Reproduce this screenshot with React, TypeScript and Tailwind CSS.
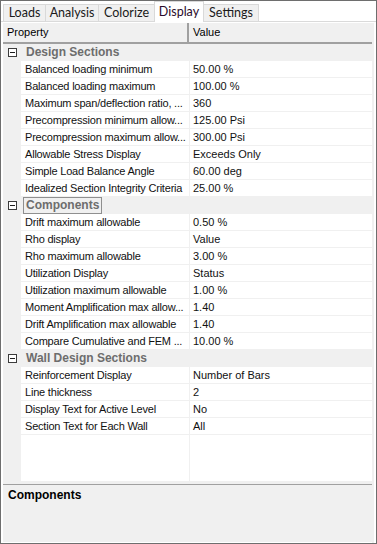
import React from 'react';

type Row = { name: string; value: string };
type Category = { title: string; selected?: boolean; rows: Row[] };

const categories: Category[] = [
  {
    title: 'Design Sections',
    rows: [
      { name: 'Balanced loading minimum', value: '50.00 %' },
      { name: 'Balanced loading maximum', value: '100.00 %' },
      { name: 'Maximum span/deflection ratio, ...', value: '360' },
      { name: 'Precompression minimum allow...', value: '125.00 Psi' },
      { name: 'Precompression maximum allow...', value: '300.00 Psi' },
      { name: 'Allowable Stress Display', value: 'Exceeds Only' },
      { name: 'Simple Load Balance Angle', value: '60.00 deg' },
      { name: 'Idealized Section Integrity Criteria', value: '25.00 %' },
    ],
  },
  {
    title: 'Components',
    selected: true,
    rows: [
      { name: 'Drift maximum allowable', value: '0.50 %' },
      { name: 'Rho display', value: 'Value' },
      { name: 'Rho maximum allowable', value: '3.00 %' },
      { name: 'Utilization Display', value: 'Status' },
      { name: 'Utilization maximum allowable', value: '1.00 %' },
      { name: 'Moment Amplification max allow...', value: '1.40' },
      { name: 'Drift Amplification max allowable', value: '1.40' },
      { name: 'Compare Cumulative and FEM ...', value: '10.00 %' },
    ],
  },
  {
    title: 'Wall Design Sections',
    rows: [
      { name: 'Reinforcement Display', value: 'Number of Bars' },
      { name: 'Line thickness', value: '2' },
      { name: 'Display Text for Active Level', value: 'No' },
      { name: 'Section Text for Each Wall', value: 'All' },
    ],
  },
];

const tabs = [
  { label: 'Loads', w: 'w-[43px]' },
  { label: 'Analysis', w: 'w-[54px]' },
  { label: 'Colorize', w: 'w-[57px]' },
  { label: 'Display', w: 'w-[50px]', active: true },
  { label: 'Settings', w: 'w-[56px]' },
];

function MinusBox() {
  return (
    <div className="w-[9px] h-[9px] border border-[#3c3c3c] bg-white flex items-center justify-center">
      <div className="w-[5px] h-[1px] bg-[#1e1e1e]" />
    </div>
  );
}

export default function App() {
  return (
    <div
      className="w-[377px] h-[544px] border border-[#6e6e6e] bg-white flex flex-col"
      style={{ fontFamily: '"Liberation Sans", Arial, sans-serif' }}
    >
      {/* Tab strip */}
      <div className="h-[21px] flex items-end pl-[2px] border-b border-[#dadada]" style={{ fontFamily: 'Lato, "Noto Sans", sans-serif' }}>
        {tabs.map((t) => (
          <div
            key={t.label}
            className={`${t.w} flex items-center justify-center text-[12.5px] text-[#1a1a1a] border-t border-l border-r border-[#d9d9d9] -ml-[1px] first:ml-0 ${
              t.active ? 'h-[21px] bg-white relative top-[1px] text-[#2a0a2a]' : 'h-[17px] bg-[#f0f0f0]'
            }`}
          >
            {t.label}
          </div>
        ))}
      </div>

      {/* Property grid */}
      <div className="mx-[2px] mt-[1px] flex-1 flex flex-col text-[11px] bg-white border-r-2 border-[#f0f0f0]">
        <div className="h-[21px] flex bg-[#f0f0f0] border-b-2 border-[#a0a0a0] text-black">
          <div className="w-[186px] flex items-center pl-[4px] border-r-2 border-[#a0a0a0]">Property</div>
          <div className="flex-1 flex items-center pl-[4px]">Value</div>
        </div>

        {categories.map((c) => (
          <div key={c.title}>
            <div className="h-[17px] flex items-center bg-[#f0f0f0]">
              <div className="w-[18px] flex justify-center">
                <MinusBox />
              </div>
              <span
                className={`ml-[2px] font-bold text-[12px] text-[#6d6d6d] leading-[15px] px-[2px] ${
                  c.selected ? 'border border-[#8f8f8f]' : 'border border-transparent'
                }`}
              >
                {c.title}
              </span>
            </div>
            {c.rows.map((r) => (
              <div key={r.name} className="h-[17px] flex">
                <div className="w-[18px] bg-[#f0f0f0]" />
                <div className="w-[168px] flex items-center pl-[4px] border-b border-[#f0f0f0] text-[#111] whitespace-nowrap tracking-[-0.2px]">
                  {r.name}
                </div>
                <div className="w-[1px] bg-[#f0f0f0]" />
                <div className="flex-1 flex items-center pl-[3px] border-b border-[#f0f0f0] text-[#111]">
                  {r.value}
                </div>
              </div>
            ))}
          </div>
        ))}

        <div className="flex-1 flex">
          <div className="w-[18px] bg-[#f0f0f0]" />
          <div className="w-[168px]" />
          <div className="w-[1px] bg-[#f0f0f0]" />
          <div className="flex-1" />
        </div>

        {/* Splitter + description */}
        <div className="h-[3px] bg-[#f0f0f0]" />
        <div className="h-[58px] bg-[#f0f0f0] border-t border-[#a0a0a0] pl-[5px] pt-[1px]">
          <span className="font-bold text-[12px] text-black">Components</span>
        </div>
        <div className="h-[1px]" />
      </div>
    </div>
  );
}
